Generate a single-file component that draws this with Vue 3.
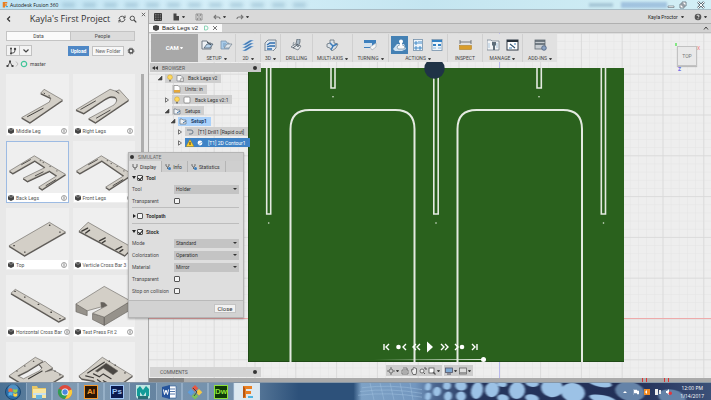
<script setup>
import { ref } from 'vue'

const leg = '#d3cfc7'
const edge = '#625f5a'
const plate = (d, extra = '') =>
  `<path d="${d}" transform="translate(0 1)" fill="#4a4743" stroke="#4a4743" stroke-width=".5" stroke-linejoin="round"/><path d="${d}" fill="${leg}" fill-rule="evenodd" stroke="${edge}" stroke-width=".6" stroke-linejoin="round"/>${extra}`
const line = (d, w = 1) => `<path d="${d}" fill="none" stroke="#3f3d3a" stroke-width="${w}" stroke-linecap="round"/>`

const parts = [
  { name: 'Middle Leg', art: plate('M38 14L57 25L23.5 48L15 43L43.5 27L45 23L34.5 18Z', line('M21 42L37 33.5M38 18l.5.3M43 20.5l.5.3', 1)) },
  { name: 'Right Legs', art: plate('M37 14L43 16L46.5 14.5L56 25L22 48L15 44L41 30Q46 25 42 22Q37 20 32 24L10 38.5L2 35Z', line('M7 34.5L22 26M23 43.5L37 35.500M43 16l3 2', .9)) },
  { name: 'Back Legs', active: true, art: plate('M28 13.5L60 32.5L36 48L32.5 45.5L51 34L43.5 29L21 39.5L16.5 36.5L39 25.5L28.5 18.5L6 31.5L2.5 29Z', line('M24 17.5L15 22.5M34 18.500h.3M37 20.500h.3M44 24.500h.3M51 29h.3M40 44L50 38M29 34L37 30', .9)) },
  { name: 'Front Legs', art: plate('M28 13.5L60 32.5L36 48L32.5 45.5L51 34L28.5 18.5L6 31.5L2.5 29Z', line('M24 17.5L15 22.5M34 18.500h.3M38 21.500h.3M44 24.500h.3M51 29h.3M40 44L50 38', .9)) },
  { name: 'Top', art: plate('M43.500 13L60 23L18 47L2 37Z', line('M43.500 16h.5M54 23h.5M7 37h.5M18 43.500h.5', 1.3)) },
  { name: 'Verticle Cross Bar 3', art: plate('M14.500 13L60 39L52 47L5 22Z', line('M8 22l6-3M12 24l4-3M26 32l6-3M29 34l3-2M43 41l6-3M47 43l3-2', 1.4)) },
  { name: 'Horizontal Cross Bar', art: plate('M8.500 13L60 42.500L53 46L4 17Z', line('M8 15h.5M18 21h.5M32 28.500h.5M45 36.500h.5M54 43h.5', 1.3)) },
  {
    name: 'Test Press Fit 2',
    art: `<path d="M2 28V36L13.500 40V33ZM19 38V44L31 50V41ZM31 41L58 25V34L31 50Z" fill="#96928b" stroke="${edge}" stroke-width=".6"/><path d="M2 28L31 10L58 25L31 41.500L19 37.500L34 29.500Q31 25.500 27.500 26.500L28 31L13.500 35Z" fill="${leg}" stroke="${edge}" stroke-width=".6"/><path d="M27.500 26.500Q31 25.500 34 29.500L28 32.500z" fill="#66625c"/>`,
  },
  { name: '', art: plate('M29 14L37 18L21 28L11 33L17 36L33 28L36 25L33 21L39 18L42 21L47 25L39 29L47 27L58 33L30 50L2 33Z', line('M10 28h.5M18 23h.5M27 18h.5M22 36L36 28M49 28h.5M54 32h.5', 1.1)) },
  { name: '', art: plate('M29 14L60 33L36 50L20 38L8 36L5 33L12 28ZM22 28L33 20L45 28L40 32L30 25L24 29Z', line('M14 30L31 19M20 31l6 3 4-3 8 5M24 37l10 7M30 38l14 7M12 33l8 2M36 18h.5M42 22h.5M52 30h.5', 1.2)) },
]

const sheetIcon = '<path d="M1 2h5l1 2h3v6H1z" fill="#eef1f4" stroke="#66727e" stroke-width=".9"/><path d="M3 9l3-4h6l-3 4z" fill="#b9d3ea" stroke="#4f5f6e" stroke-width=".8"/><path d="M6 3l4 3" stroke="#39454f"/>'
const groups = [
  { label: 'SETUP', menu: true, w: 38, icons: [
    sheetIcon,
    '<path d="M1 2h5l1 2h2v6H1z" fill="#a9cbe9" stroke="#7d95ab" stroke-width=".8"/><path d="M4 9l3-4h5l-3 4z" fill="#dfe7ee" stroke="#7d8b98" stroke-width=".8"/><path d="M3 5h3M3 7h2" stroke="#5b86b0" stroke-width=".7"/>' ] },
  { label: '2D', menu: true, w: 25, icons: ['<path d="M0 6L8 1h4L4 6zM0 9L8 4h4L4 9zM0 12L8 7h4L4 12z" fill="#3e78b5" stroke="#d9e6f2" stroke-width=".5"/>'] },
  { label: '3D', menu: true, w: 20, icons: ['<path d="M1 4l3-3h8v8l-3 3H1z" fill="#dfe7ef" stroke="#66727e" stroke-width=".8"/><path d="M3 6l3-2h5M3 8l3-1h5M3 10h5" fill="none" stroke="#2f6dae" stroke-width="1.300"/>'] },
  { label: 'DRILLING', w: 32, icons: ['<path d="M1 8l4-3 6 2-3 4z" fill="#e4e8eb" stroke="#6b747d" stroke-width=".8"/><path d="M7 0h3v3l-2 5-2-3z" fill="#a9b8c5" stroke="#515b65" stroke-width=".7"/><path d="M3 9l5-4" stroke="#515b65"/><path d="M4 3q-2 2 0 4" fill="none" stroke="#79858f" stroke-width=".8"/>'] },
  { label: 'MULTI-AXIS', menu: true, w: 40, icons: ['<path d="M1 5l3-1V1h4v3l4 1-2 4-4 3-2-3-3-1z" fill="#dce3e9" stroke="#65717c" stroke-width=".8"/><path d="M4 4l3 3 4-2M7 7l-2 4" fill="none" stroke="#3d7cba" stroke-width="1.500"/>'] },
  { label: 'TURNING', menu: true, w: 36, icons: ['<path d="M0 1h12v6H9l-3 2H0z" fill="#3e80bd"/><path d="M0 4h8v4H0z" fill="#d4e2ee"/><path d="M6 8l6-4v4l-4 3z" fill="#f7f7f7" stroke="#8795a2" stroke-width=".5"/>'] },
  { label: 'ACTIONS', menu: true, w: 59, icons: [
    '<path d="M0 10l4-5h7l2 5-4 2H2z" fill="#cfe2f1"/><path d="M4 8l2-2h4l2 2-1 2H5z" fill="#fafafa" stroke="#456680" stroke-width=".5"/><path d="M7 7V4h2v3z" fill="#fff"/><circle cx="8" cy="2.500" r="2" fill="#fff"/>',
    '<rect x="1.500" y=".5" width="9" height="11" fill="#edf4fa" stroke="#7391ab" stroke-width=".8"/><path d="M3 3h2v2H3zM7 2v3M9 2v3M3 8h2v2H3zM7 8h2v2H7z" fill="none" stroke="#3381c4" stroke-width=".9"/>',
    '<rect x="1" y=".5" width="10" height="11" fill="#edf4fa" stroke="#7391ab" stroke-width=".8"/><path d="M1 2h10M2 6h3M7 6h3" stroke="#3381c4" stroke-width="2"/><path d="M2 9h3M7 9h3" stroke="#8ab6dc"/>' ] },
  { label: 'INSPECT', w: 35, icons: ['<path d="M1 3h11M1 1v4M12 1v4" stroke="#555d65" stroke-width=".8"/><rect x=".5" y="6.500" width="12" height="4" fill="#d99d2b" stroke="#a8761a" stroke-width=".5"/>'] },
  { label: 'MANAGE', menu: true, w: 40, icons: [
    '<path d="M0 1h4l1 1h7v9H0z" fill="#f4f6f8" stroke="#7a8793" stroke-width=".8"/><path d="M5 3h4v3L8 7v4H6V7L5 6z" fill="#5f6e7b"/><path d="M2 4v5M10 4v5" stroke="#aac5dc"/>',
    '<rect x="1" y="1" width="11" height="10" fill="#fff" stroke="#313b46"/><path d="M1 2h11" stroke="#27313b" stroke-width="2"/><path d="M4 5l5 4" stroke="#30506e" stroke-width="1.100"/><path d="M3 9h3M8 5h2" stroke="#3f83c0" stroke-width="1.100"/>' ] },
  { label: 'ADD-INS', menu: true, w: 34, icons: ['<rect x="1" y="1" width="10" height="9" fill="#c7ccd1" stroke="#606a73" stroke-width=".8"/><path d="M1 2h10M1 5h10" stroke="#57616b" stroke-width="1.300"/><circle cx="10" cy="9" r="2.300" fill="#8ca3c2" stroke="#4d617f" stroke-width=".8"/>'] },
]

const bulb = '<circle cx="4" cy="3.200" r="2.400" fill="#ffd95e" stroke="#c99f2c" stroke-width=".5"/><path d="M3 6h2v1.500H3z" fill="#777"/>'
const box = '<path d="M1 1.500h4l2 2V7H1z" fill="#fafafa" stroke="#7b8087" stroke-width=".7"/>'
const folder = '<path d="M1 2h2l1 1h3v4H1z" fill="#eef2f6" stroke="#65717d" stroke-width=".7"/><path d="M4 6l3-2" stroke="#3a6fa3"/>'
const tree = [
  { text: 'Back Legs v2', depth: 0, state: 'open', icons: [bulb, box + '<path d="M5 4h2.500v3.500H4z" fill="#ddd" stroke="#777" stroke-width=".5"/>'] },
  { text: 'Units: in', depth: 1, state: 'none', icons: ['<path d="M1 .5h4l2 2v5H1z" fill="#fff" stroke="#777" stroke-width=".6"/><path d="M1 5h6v2.500H1z" fill="#e5a83b"/>'] },
  { text: 'Back Legs v2:1', depth: 1, state: 'closed', icons: [bulb, '<rect x="1" y="1" width="6" height="6" rx="1" fill="#fff" stroke="#777" stroke-width=".7"/>'] },
  { text: 'Setups', depth: 1, state: 'open', icons: [folder] },
  { text: 'Setup1', depth: 2, state: 'open', icons: [folder], tone: 'soft' },
  { text: '[T1] Drill1 [Rapid out]', depth: 3, state: 'closed', icons: ['<path d="M1 2h4a2 2 0 0 1 0 4H3" fill="none" stroke="#6a7b8b"/>'] },
  { text: '[T1] 2D Contour1', depth: 3, state: 'closed', icons: ['<path d="M4 .5L8 7.500H0z" fill="#ffcf2e" stroke="#a07c10" stroke-width=".4"/><path d="M4 3v3" stroke="#222" stroke-width=".9"/>', '<circle cx="4" cy="4" r="2.400" fill="#fff"/><path d="M2 6l4-3" stroke="#8fb6da"/>'], tone: 'strong' },
]

const tool = ref('Holder')
const mode = ref('Standard')
const color = ref('Operation')
const material = ref('Mirror')
const position = ref(100)

const playback = [
  { name: 'Start', w: 8, d: 'M1 1v6M6 1L3 4l3 3' },
  { name: 'Previous operation', w: 11, d: 'M10 1L7 4l3 3', dot: 2.5 },
  { name: 'Step back', w: 9, d: 'M4 1L1 4l3 3M8 1L5 4l3 3' },
  { name: 'Play', w: 8, play: true },
  { name: 'Step forward', w: 9, d: 'M1 1l3 3-3 3M5 1l3 3-3 3' },
  { name: 'Next operation', w: 11, d: 'M1 1l3 3-3 3', dot: 8 },
  { name: 'End', w: 8, d: 'M2 1l3 3-3 3M7 1v6' },
]

const apps = [
  { name: 'Start', flat: true, art: '<circle cx="8" cy="8" r="7.500" fill="#2c6ea8" stroke="#123c66" stroke-width=".8"/><circle cx="8" cy="5" r="5" fill="#75b5e0" opacity=".5"/><path d="M3.500 5q2-1.500 4 0v3q-2-1.200-4 0z" fill="#f0653a"/><path d="M8.300 5q2 1.300 4 0v3q-2 1.300-4 0z" fill="#9bcf3f"/><path d="M3.500 9q2-1.300 4 0v3q-2-1.300-4 0z" fill="#55b6ee"/><path d="M8.300 9q2 1.300 4 0v3q-2 1.300-4 0z" fill="#ffd23e"/>' },
  { name: 'Explorer', art: '<path d="M1 2h5l1 2h8v10H1z" fill="#e8c767"/><path d="M2 5h13v9H2z" fill="#f8e6a0"/><path d="M2 9h13v2H2z" fill="#c9e2ee"/><path d="M5 11h6v4H5z" fill="#69b4dd"/>' },
  { name: 'Chrome', art: '<circle cx="8" cy="8" r="7" fill="#dd4b3e"/><path d="M8 8L1.900 4.500A7 7 0 0 0 8 15l3-5z" fill="#2f9e55"/><path d="M8 8l6.700-2.500A7 7 0 0 1 8 15l3-5z" fill="#fbcc3a"/><circle cx="8" cy="8" r="3.500" fill="#fff"/><circle cx="8" cy="8" r="2.700" fill="#4a87dd"/>' },
  { name: 'Illustrator', text: 'Ai', bg: '#2c1604', fg: '#f79a2c' },
  { name: 'Photoshop', text: 'Ps', bg: '#0b1b50', fg: '#9ec6f8' },
  { name: 'Maya', flat: true, art: '<path d="M1 1h14v13l-3 1H3l-2-2z" fill="#bfe6e2"/><path d="M2 12V5l3-3 3 4 3-4 3 3v7l-3 1V8l-3 4-3-4v5z" fill="#139b98"/><path d="M3 12h10v3H3z" fill="#2a6f75"/>' },
  { name: 'Word', art: '<path d="M7 2h8v12H7z" fill="#fff" stroke="#2b5797" stroke-width=".6"/><path d="M9 5h5M9 7.500h5M9 10h5" stroke="#2b5797" stroke-width=".8"/><path d="M1 3l8-2v14l-8-2z" fill="#26549c"/><path d="M2.500 5.500l1 5L5 6l1.500 4.500 1-5" fill="none" stroke="#fff"/>' },
  { name: 'Git', art: '<path d="M8 1l3.300 3.300L8 7.600 4.700 4.300z" fill="#e9573f"/><path d="M4 5l3.300 3.300L4 11.600.7 8.300z" fill="#5b9fe0"/><path d="M12 5l3.300 3.300L12 11.600 8.700 8.300z" fill="#f6c945"/><path d="M8 9l3.300 3.300L8 15.600 4.700 12.300z" fill="#7cc35c"/><path d="M6 4l4 4-3 4" fill="none" stroke="#3b4551"/>' },
  { name: 'Dreamweaver', text: 'Dw', bg: '#0e3a08', fg: '#8ee236' },
  { name: 'Fusion 360', current: true, art: '<path d="M4 2h9v3H7v2h5v3H7v4H4z" fill="#e87f22"/><path d="M4 2l2 2v9l-2 1z" fill="#b95710"/><path d="M9 12h5v2H9z" fill="#4fb4e0"/>' },
]

const cells = [
  [128, 4, 3, 4], [128, 14, 3, 4], [137, 9, 4, 5], [147, 3, 4, 4], [148, 14, 4, 5], [161, 3, 6, 5], [161, 14, 5, 5],
  [177, 8, 6, 9], [192, 7, 7, 8], [202, 1, 5, 3], [203, 16, 6, 4], [217, 8, 8, 9], [232, 16, 7, 4], [232, 0, 7, 4],
  [252, 5, 11, 10], [273, 10, 12, 10], [300, 0, 12, 4], [303, 17, 14, 4], [330, 9, 15, 10], [372, 15, 14, 8],
]
</script>

<template>
  <div class="screen">
    <header class="titlebar">
      <svg class="f-logo" viewBox="0 0 8 8" aria-hidden="true"><path d="M1 .5h6v2H4v1h2.500v2H4v2.500H1z" fill="#e87f22" /><path d="M5 6h3v1.500H5z" fill="#45a8d8" /></svg>
      <span class="app-name">Autodesk Fusion 360</span>
      <div class="glass" aria-hidden="true"><i v-for="n in 12" :key="n"></i></div>
      <div class="glass-right" aria-hidden="true"><i></i><b></b></div>
      <div class="win-buttons">
        <button aria-label="Minimize"><svg viewBox="0 0 8 8"><path d="M1 5h6v1.500H1z" fill="#fff" stroke="#5b6871" stroke-width=".6" /></svg></button>
        <button aria-label="Restore"><svg viewBox="0 0 8 8"><path d="M3 1h4v4H3zM1 3h4v4H1z" fill="#fff" stroke="#5b6871" stroke-width=".8" /></svg></button>
        <button class="last" aria-label="Close window"><svg viewBox="0 0 8 8"><path d="M1 1l6 6M7 1L1 7" stroke="#5b6871" stroke-width="2.400" /><path d="M1 1l6 6M7 1L1 7" stroke="#fff" /></svg></button>
      </div>
    </header>

    <div class="main">
      <aside class="data-panel">
        <button class="panel-close" aria-label="Close data panel"><svg viewBox="0 0 6 6"><path d="M1 1l4 4M5 1L1 5" stroke="#555" /></svg></button>
        <div class="project">
          <button aria-label="Back"><svg class="i8" viewBox="0 0 8 8"><path d="M4 1.500L1.500 4 4 6.500" fill="none" stroke="#333" stroke-width="1.200" /></svg></button>
          <h1>Kayla's First Project</h1>
          <button aria-label="Refresh"><svg class="i8" viewBox="0 0 8 8"><path d="M1 4a3 3 0 0 1 5-2l1 1M7 4a3 3 0 0 1-5 2L1 5M7 .5V3H5M1 7.500V5h2" fill="none" stroke="#444" stroke-width=".9" /></svg></button>
          <button aria-label="Search"><svg class="i8" viewBox="0 0 8 8"><circle cx="3.300" cy="3.300" r="2.200" fill="none" stroke="#444" stroke-width=".9" /><path d="M5 5l2.300 2.300" stroke="#444" stroke-width="1.200" /></svg></button>
        </div>
        <div class="data-tabs"><button class="on">Data</button><button>People</button></div>
        <div class="actions">
          <div class="split">
            <button aria-label="Branches"><svg class="i8" viewBox="0 0 8 8"><path d="M2 1v6M2 6h2q2 0 2-3" fill="none" stroke="#444" stroke-width=".9" /><circle cx="2" cy="1.500" r="1" fill="#444" /><circle cx="6" cy="2" r="1.200" fill="#444" /><circle cx="2" cy="6.500" r="1" fill="#444" /></svg></button>
            <button aria-label="More branches"><svg class="i8" viewBox="0 0 8 8"><path d="M1.500 2.500L4 5l2.500-2.500" fill="none" stroke="#444" stroke-width="1.200" /></svg></button>
          </div>
          <button class="upload">Upload</button>
          <button class="folder">New Folder</button>
          <button class="gear" aria-label="Settings"><svg class="i8" viewBox="0 0 8 8"><circle cx="4" cy="4" r="2" fill="none" stroke="#555" stroke-width="1.400" /><circle cx="4" cy="4" r="3" fill="none" stroke="#555" stroke-width=".8" stroke-dasharray="1.200 1.200" /></svg></button>
        </div>
        <nav class="crumbs">
          <svg class="i8" viewBox="0 0 8 8"><path d="M4 2L1.500 6.500M4 2l2.500 4.500" stroke="#444" stroke-width=".8" /><path d="M3 .5h2v2H3zM.5 5h2v2h-2zM5.500 5h2v2h-2z" fill="#444" /></svg>
          <svg class="i4" viewBox="0 0 4 8"><path d="M1 1.500L3 4 1 6.500" fill="none" stroke="#aaa" stroke-width=".7" /></svg>
          <svg class="i8" viewBox="0 0 8 8"><circle cx="4" cy="4" r="2.700" fill="none" stroke="#3fc598" stroke-width="1.200" /></svg>
          <a href="#master">master</a>
        </nav>
        <div class="library">
          <div class="cards">
            <article v-for="(p, k) in parts" :key="k" class="card" :class="{ active: p.active }">
              <svg class="thumb" viewBox="0 0 62 52" v-html="p.art"></svg>
              <footer v-if="p.name">
                <svg class="i6" viewBox="0 0 6 6"><path d="M0 1l3-1 3 1v3.500L3 6 0 4.500z" fill="#444" /><path d="M0 1l3 1.300L6 1" fill="none" stroke="#ccc" stroke-width=".5" /></svg>
                <span>{{ p.name }}</span>
                <svg class="i6" viewBox="0 0 6 6"><circle cx="3" cy="3" r="2.500" fill="none" stroke="#777" stroke-width=".7" /><path d="M3 1.300v3.400" stroke="#777" stroke-width=".9" /></svg>
              </footer>
            </article>
          </div>
          <div class="scroll"><i></i></div>
        </div>
      </aside>

      <section class="workspace">
        <div class="quick">
          <svg class="i8" viewBox="0 0 8 8"><path d="M.5 .5h7v7h-7zM.5 3h7M.5 5.300h7M3 .5v7M5.300 .5v7" fill="#777" stroke="#333" stroke-width=".9" /></svg>
          <span class="with-menu"><svg class="i8" viewBox="0 0 8 8"><path d="M1.500 .5h3v2.500h2.500v4.500h-5.500z" fill="#444" /></svg><i class="caret"></i></span>
          <svg class="i8" viewBox="0 0 8 8"><path d="M1 1h6v6H1zM2.500 1v2h3V1M2.500 7V5h3v2" fill="none" stroke="#888" stroke-width=".8" /></svg>
          <span class="with-menu"><svg class="i8" viewBox="0 0 8 8"><path d="M3 2L1 4l2 2M1 4h4q2 0 2 2" fill="none" stroke="#777" stroke-width="1.100" /></svg><i class="caret"></i></span>
          <span class="with-menu"><svg class="i8" viewBox="0 0 8 8"><path d="M5 2l2 2-2 2M7 4H3Q1 4 1 6" fill="none" stroke="#777" stroke-width="1.100" /></svg><i class="caret"></i></span>
          <span class="user">Kayla Proctor <i class="caret"></i></span>
          <span class="with-menu"><svg class="i8" viewBox="0 0 8 8"><circle cx="4" cy="4" r="3.300" fill="#555" /><path d="M3 3q0-1 1-1t1 1-1 1.200M4 5.200v1" fill="none" stroke="#fff" stroke-width=".8" /></svg><i class="caret"></i></span>
        </div>
        <div class="doc-tabs">
          <div class="doc-tab">
            <svg class="i6" viewBox="0 0 6 6"><path d="M0 1l3-1 3 1v3.500L3 6 0 4.500z" fill="#444" /></svg>
            <span>Back Legs v2</span>
            <svg class="i6 status" viewBox="0 0 6 6"><path d="M1.500 1h1.500a2 2 0 0 1 0 4H1.500z" fill="none" stroke="#6fcca6" stroke-width=".8" /></svg>
            <button aria-label="Close document"><svg class="i6" viewBox="0 0 6 6"><path d="M1 1l4 4M5 1L1 5" stroke="#777" /></svg></button>
          </div>
          <svg class="i6 collapse" viewBox="0 0 6 6"><path d="M1 4.500L3 2l2 2.500" fill="none" stroke="#444" /></svg>
        </div>

        <div class="stage">
          <svg class="canvas" viewBox="149 33 562 345" preserveAspectRatio="xMinYMin slice" role="img" aria-label="Stock simulation">
            <defs>
              <pattern id="minor" x="499.300" y="318.500" width="8.160" height="8.160" patternUnits="userSpaceOnUse"><path d="M0 0H8.160M0 0V8.160" stroke="#e4e4e4" stroke-width="1" fill="none" /></pattern>
              <pattern id="major" x="499.300" y="318.500" width="40.800" height="40.800" patternUnits="userSpaceOnUse"><path d="M0 .4H40.800M.4 0V40.800" stroke="#d6d6d6" stroke-width=".8" fill="none" /></pattern>
            </defs>
            <rect x="149" y="32" width="562" height="346" fill="#eeeeee" />
            <rect x="149" y="32" width="562" height="346" fill="url(#minor)" />
            <rect x="149" y="32" width="562" height="346" fill="url(#major)" />
            <path d="M149 318.500H711" stroke="#eeaaaa" />
            <path d="M499.500 32V378" stroke="#b9b9ec" />
            <rect x="248" y="68" width="376" height="294" fill="#2a611d" />
            <path d="M248.500 68V362M248 361.500H624" stroke="#1f4a16" fill="none" />
            <g fill="none" stroke="#e4eae1" stroke-width="2">
              <path d="M290.500 362V129Q290.500 110 309.500 110H395.500Q414.500 110 414.500 129V362" />
              <path d="M457.500 362V129Q457.500 110 476.500 110H563Q582 110 582 129V362" />
              <g stroke-width="1.600">
                <path d="M266.700 68V214H270.700V68M433.800 68V214H438.200V68M601.300 68V214H605.500V68M331 68V88H335V68M537 68V88H541.300V68" />
              </g>
            </g>
            <g fill="#dfe8db"><circle cx="268.700" cy="223" r=".8" /><circle cx="436" cy="223" r=".8" /><circle cx="603.500" cy="223" r=".8" /><circle cx="333" cy="96.700" r=".8" /><circle cx="539" cy="96.700" r=".8" /></g>
            <circle cx="434.500" cy="68.500" r="10.200" fill="#1f3346" />
          </svg>

          <div class="ribbon">
            <button class="cam">CAM <i class="caret"></i></button>
            <div v-for="g in groups" :key="g.label" class="group" :style="{ width: g.w + 'px' }">
              <div class="icons">
                <button v-for="(ic, k) in g.icons" :key="k" :class="{ picked: g.label === 'ACTIONS' && k === 0 }" :aria-label="g.label + ' ' + (k + 1)"><svg class="i12" viewBox="0 0 13 12" v-html="ic"></svg></button>
              </div>
              <span class="label">{{ g.label }}<i v-if="g.menu" class="caret"></i></span>
            </div>
          </div>

          <div class="browser">
            <div class="bar"><svg class="i6" viewBox="0 0 6 6"><path d="M3 1L0 3l3 2zM6 1L3 3l3 2z" fill="#333" /></svg><span>BROWSER</span><i class="pin"></i></div>
            <ul>
              <li v-for="n in tree" :key="n.text" :class="['d' + n.depth, n.tone]">
                <svg class="i6 twist" viewBox="0 0 6 6"><path v-if="n.state === 'open'" d="M5 1v4H1z" fill="#444" stroke="#444" stroke-width=".6" /><path v-if="n.state === 'closed'" d="M1.500 .8L4.500 3 1.500 5.200z" fill="none" stroke="#555" stroke-width=".8" /></svg>
                <span class="node"><svg v-for="(ic, k) in n.icons" :key="k" class="i8" viewBox="0 0 8 8" v-html="ic"></svg><span class="text">{{ n.text }}</span></span>
              </li>
            </ul>
          </div>

          <div class="cube" aria-hidden="true">
            <div class="face">TOP</div>
            <span class="ax-x">X</span><span class="ax-z">Z</span><i class="ax-y"></i>
          </div>

          <div class="player">
            <div class="keys">
              <button v-for="b in playback" :key="b.name" :aria-label="b.name">
                <svg v-if="b.play" width="8" height="12" viewBox="0 0 8 12"><path d="M1 .5L7 6 1 11.500z" fill="#fff" /></svg>
                <svg v-else :width="b.w" height="8" :viewBox="`0 0 ${b.w} 8`"><path :d="b.d" fill="none" stroke="#fff" stroke-width="1.400" /><circle v-if="b.dot" :cx="b.dot" cy="4" r="2.300" fill="#fff" /></svg>
              </button>
            </div>
            <input v-model="position" type="range" min="0" max="100" aria-label="Simulation position" />
          </div>

          <div class="comments"><span>COMMENTS</span><i class="pin"></i></div>

          <div class="nav-tools">
            <div>
              <svg class="i8" viewBox="0 0 8 8"><path d="M4 0v8M0 4h8" stroke="#666" stroke-width=".9" /><circle cx="4" cy="4" r="2" fill="#ccc" stroke="#666" stroke-width=".8" /></svg><i class="caret"></i>
              <svg class="i8" viewBox="0 0 8 8"><path d="M1 3h6v4H1zM2 1h4v2" fill="#ddd" stroke="#666" stroke-width=".8" /><path d="M2 5h4" stroke="#666" stroke-width=".8" /></svg>
              <svg class="i8" viewBox="0 0 8 8"><path d="M1.500 4V2.500L3 3V1l1-.5 1 .5 1.500.5V5L6 7.500H3z" fill="#eee" stroke="#555" stroke-width=".8" /></svg>
              <svg class="i8" viewBox="0 0 8 8"><circle cx="3" cy="4" r="2" fill="#eee" stroke="#555" stroke-width=".8" /><path d="M4.500 5.500L6 7M5 1h2v2" fill="none" stroke="#555" /></svg>
              <svg class="i8" viewBox="0 0 8 8"><rect x="1" y="1" width="5" height="5" fill="#fff" stroke="#555" stroke-width=".8" /><path d="M5 5l2.500 2.500" stroke="#555" stroke-width="1.200" /></svg><i class="caret"></i>
            </div>
            <div>
              <svg class="i8" viewBox="0 0 8 8"><rect x=".5" y="1" width="7" height="4.500" fill="#7fa9d2" stroke="#556" stroke-width=".8" /><path d="M2 7h4" stroke="#556" /></svg><i class="caret"></i>
              <svg class="i8" viewBox="0 0 8 8"><rect x=".5" y="1" width="7" height="6" fill="#ddd" stroke="#666" stroke-width=".8" /><path d="M1 5h6v2H1z" fill="#999" /></svg><i class="caret"></i>
            </div>
          </div>
        </div>
        <div class="timeline"><i class="done"></i><span><i></i><i></i></span><span><i></i><i></i></span></div>
      </section>

      <form class="dialog" aria-label="Simulate" @submit.prevent>
        <div class="dialog-title"><i class="pin"></i>SIMULATE</div>
        <div class="dialog-tabs">
          <button type="button" class="on"><svg class="i6" viewBox="0 0 6 6"><path d="M1 0v3l2 1 2-1V0M3 4v2" fill="none" stroke="#666" /></svg>Display</button>
          <button type="button"><svg class="i6" viewBox="0 0 6 6"><path d="M1 0v2l1.500 1L4 2V0M2.500 3v2" fill="none" stroke="#666" stroke-width=".9" /><circle cx="4.500" cy="4.500" r="1.500" fill="#3c7fc0" /></svg>Info</button>
          <button type="button"><svg class="i6" viewBox="0 0 6 6"><path d="M1 0v2l1.500 1L4 2V0M2.500 3v2" fill="none" stroke="#666" stroke-width=".9" /><circle cx="4.500" cy="4.500" r="1.500" fill="#3c7fc0" /></svg>Statistics</button>
        </div>
        <div class="sect">
          <label class="head open"><input type="checkbox" checked />Tool</label>
          <div class="field"><label for="tool">Tool</label><span class="sel"><select id="tool" v-model="tool"><option>Holder</option><option>Shaft</option></select></span></div>
          <div class="field"><label for="tool-tr">Transparent</label><input id="tool-tr" type="checkbox" /></div>
        </div>
        <div class="sect mid">
          <label class="head"><input type="checkbox" />Toolpath</label>
        </div>
        <div class="sect last">
          <label class="head open"><input type="checkbox" checked />Stock</label>
          <div class="field"><label for="mode">Mode</label><span class="sel"><select id="mode" v-model="mode"><option>Standard</option><option>Fast</option></select></span></div>
          <div class="field"><label for="color">Colorization</label><span class="sel"><select id="color" v-model="color"><option>Operation</option><option>Tool</option></select></span></div>
          <div class="field"><label for="mat">Material</label><span class="sel"><select id="mat" v-model="material"><option>Mirror</option><option>Matte</option></select></span></div>
          <div class="field"><label for="st-tr">Transparent</label><input id="st-tr" type="checkbox" /></div>
          <div class="field"><label for="stop">Stop on collision</label><input id="stop" type="checkbox" /></div>
        </div>
        <div class="foot"><button type="button">Close</button></div>
      </form>
    </div>

    <footer class="taskbar">
      <svg class="wallpaper" viewBox="0 0 411 18" preserveAspectRatio="none" aria-hidden="true">
        <defs>
          <linearGradient id="sky" x1="0" x2="1"><stop offset="0" stop-color="#2d517a" /><stop offset=".13" stop-color="#2d517a" /><stop offset=".15" stop-color="#7ea2c6" /><stop offset=".28" stop-color="#7397bf" /><stop offset=".33" stop-color="#4a658e" /><stop offset=".42" stop-color="#25355c" /><stop offset=".8" stop-color="#222f57" /><stop offset="1" stop-color="#3b5078" /></linearGradient>
          <filter id="soft"><feGaussianBlur stdDeviation=".8" /></filter>
        </defs>
        <rect width="411" height="18" fill="url(#sky)" />
        <path d="M62 5Q90 1 122 7M60 9Q90 5 122 11M58 13Q90 9 122 15M70 0l4 18M80 0l4 18M90 0l4 18M100 0l4 18M110 0l3 18" fill="none" stroke="#a3c3e0" stroke-width=".8" opacity=".6" />
        <g filter="url(#soft)"><ellipse v-for="(c, k) in cells" :key="k" :cx="c[0]" :cy="c[1]" :rx="c[2]" :ry="c[3]" :transform="`rotate(12 ${c[0]} ${c[1]})`" :fill="c[0] > 310 ? '#6583a8' : '#9cc2e6'" /></g>
      </svg>
      <div class="apps">
        <button v-for="a in apps" :key="a.name" :aria-label="a.name" :class="{ flat: a.flat, current: a.current }">
          <span v-if="a.text" class="badge" :style="{ background: a.bg, color: a.fg }">{{ a.text }}</span>
          <svg v-else class="i16" viewBox="0 0 16 16" v-html="a.art"></svg>
        </button>
      </div>
      <div class="tray">
        <svg class="i6" viewBox="0 0 6 6"><path d="M1 4l2-2 2 2z" fill="#fff" /></svg>
        <svg class="i6" viewBox="0 0 6 6"><path d="M0 0v6M1 1h3v3H1M4 2h2v3H4" fill="#fff" stroke="#fff" stroke-width=".5" /></svg>
        <svg class="i6" viewBox="0 0 6 6"><rect width="6" height="6" fill="#f08a24" /><path d="M1 3l2-2v4z" fill="#fff" /></svg>
        <svg class="i6" viewBox="0 0 6 6"><path d="M0 0h3v6H0zM4 1h2v4H4z" fill="#eee" /></svg>
        <svg class="i6" viewBox="0 0 6 6"><path d="M0 2h1l2-2v6L1 4H0z" fill="#fff" /><circle cx="4.300" cy="4.300" r="1.700" fill="#e0373c" /></svg>
        <div class="clock"><span>12:00 PM</span><span>1/14/2017</span></div>
      </div>
    </footer>
  </div>
</template>

<style>
body { margin: 0; }
</style>

<style scoped>
.screen { display: flex; flex-direction: column; height: 100vh; overflow: hidden; font-family: Roboto, "Liberation Sans", sans-serif; font-size: 5px; line-height: 8px; color: #4a4a4a; background: #e8e8e8; }
.screen * { box-sizing: border-box; }
button { font: inherit; color: inherit; background: none; border: 0; padding: 0; margin: 0; }
svg { display: block; flex: none; }
.i4 { width: 4px; height: 8px; }
.i6 { width: 6px; height: 6px; }
.i8 { width: 8px; height: 8px; }
.i12 { width: 13px; height: 12px; }
.i16 { width: 16px; height: 16px; }
.caret { display: inline-block; flex: none; border: 1px solid transparent; border-top: 2px solid #444; border-bottom: 0; width: 3px; height: 2px; margin-left: 2px; vertical-align: middle; }
.pin { width: 4px; height: 4px; border-radius: 50%; background: #333; flex: none; }

.titlebar { flex: none; display: flex; align-items: center; height: 10px; padding: 0 6px 0 2px; background: linear-gradient(90deg, #bfe3f3, #d6f0f9 30%, #c4e5f0 60%, #d3eff6); border-bottom: 1px solid #a9bcc5; }
.f-logo { width: 6px; height: 7px; margin-right: 2px; }
.app-name { font-family: "Open Sans", "Liberation Sans", sans-serif; color: #111; white-space: nowrap; }
.glass { display: flex; gap: 8px; margin-left: 4px; filter: blur(2px); }
.glass i { width: 13px; height: 4px; background: #86aec4; opacity: .6; }
.glass-right { display: flex; gap: 8px; margin-left: auto; filter: blur(1px); align-items: center; }
.glass-right i { width: 24px; height: 4px; background: #8fb0c4; opacity: .6; }
.glass-right b { width: 46px; height: 6px; background: #83a9d1; opacity: .6; }
.win-buttons { display: flex; gap: 4px; }
.win-buttons .last { margin-left: 6px; }
.win-buttons svg { width: 8px; height: 8px; }

.main { flex: 1; min-height: 0; display: flex; position: relative; }
.data-panel { position: relative; width: 149px; flex: none; display: flex; flex-direction: column; min-height: 0; padding: 3px 4px 0 6px; background: #e8e8e8; border-right: 1px solid #aaa; }
.panel-close { position: absolute; right: 2px; top: 2px; }
.panel-close svg { width: 5px; height: 5px; }
.project { display: flex; align-items: center; height: 12px; padding-right: 7px; gap: 3px; }
.project h1 { flex: 1; margin: 0; padding-left: 8px; text-align: center; font: 400 9px/12px "Open Sans", sans-serif; color: #333; white-space: nowrap; }
.data-tabs { display: flex; width: 129px; height: 10px; margin-top: 6px; border: 1px solid #c4c4c4; }
.data-tabs button { flex: 1; line-height: 8px; background: #dcdcdc; }
.data-tabs .on { background: #fafafa; border-right: 1px solid #c4c4c4; }
.actions { display: flex; align-items: center; width: 129px; height: 11px; margin-top: 4px; gap: 3px; }
.split { display: flex; border: 1px solid #c2c2c2; background: #f3f3f3; height: 11px; margin-right: auto; }
.split button { width: 12px; display: grid; place-items: center; }
.split button + button { border-left: 1px solid #c2c2c2; }
.upload { width: 21px; height: 10px; background: #4f88c6; color: #fff; font-weight: 700; }
.folder { width: 32px; height: 10px; background: #f7f7f7; border: 1px solid #c2c2c2; color: #666; line-height: 8px; white-space: nowrap; }
.crumbs { display: flex; align-items: center; gap: 1px; height: 10px; margin-top: 3px; }
.crumbs a { color: #444; text-decoration: none; margin-left: 1px; }
.library { flex: 1; min-height: 0; display: flex; gap: 6px; margin-top: 5px; overflow: hidden; }
.cards { width: 129px; display: grid; grid-template-columns: 1fr 1fr; grid-auto-rows: 62px; gap: 5px 4px; }
.card { display: flex; flex-direction: column; min-width: 0; background: #efefef; border: 1px solid transparent; }
.card.active { border-color: #9dbbe3; }
.thumb { width: 100%; height: 52px; }
.card footer { flex: none; display: flex; align-items: center; gap: 2px; height: 9px; padding: 0 1px; background: #fff; margin-top: -1px; }
.card footer span { flex: 1; white-space: nowrap; color: #555; }
.scroll { width: 3px; }
.scroll i { display: block; height: 110px; background: #adadad; }

.workspace { flex: 1; min-width: 0; display: flex; flex-direction: column; }
.quick { flex: none; display: flex; align-items: center; gap: 10px; height: 14px; padding: 0 4px 0 5px; background: #d9d9d9; border-bottom: 1px solid #b0b0b0; }
.with-menu { display: flex; align-items: center; }
.user { margin-left: auto; color: #222; white-space: nowrap; }
.doc-tabs { flex: none; display: flex; align-items: center; height: 9px; background: #d2d2d2; border-bottom: 1px solid #bdbdbd; padding-right: 2px; }
.doc-tab { display: flex; align-items: center; gap: 3px; height: 8px; width: 73px; padding: 0 4px; background: #fafafa; color: #222; font-family: "Liberation Sans", sans-serif; font-size: 6px; white-space: nowrap; }
.doc-tab .status { margin-left: auto; }
.collapse { margin-left: auto; }

.stage { position: relative; flex: 1; min-height: 0; overflow: hidden; background: #eee; }
.canvas { position: absolute; inset: 0; width: 100%; height: 100%; }
.ribbon { position: absolute; top: 1px; left: 2px; display: flex; height: 28px; background: #e1e1e1; }
.cam { width: 47px; background: #a8a8a8; color: #fff; font-size: 6px; font-weight: 700; }
.cam .caret { border-top-color: #fff; margin-left: 0; }
.group { display: flex; flex-direction: column; align-items: center; border-right: 1px solid #d0d0d0; padding-top: 2px; }
.group:last-child { border-right: 0; }
.icons { display: flex; gap: 2px; height: 18px; }
.icons button { width: 17px; display: grid; place-items: center; }
.icons .picked { background: #4481b4; }
.label { line-height: 8px; white-space: nowrap; color: #444; }

.browser { position: absolute; top: 30px; left: 1px; width: 111px; }
.bar, .comments { display: flex; align-items: center; gap: 4px; height: 9px; padding: 0 4px 0 2px; background: #c9c9c9; color: #555; }
.bar .pin, .comments .pin { margin-left: auto; }
.browser ul { list-style: none; margin: 1px 0 0; padding: 0; height: 75px; display: flex; flex-direction: column; }
.browser li { flex: 1; display: flex; align-items: center; gap: 2px; padding-left: 7px; white-space: nowrap; }
.browser .d1 { padding-left: 14px; }
.browser .d2 { padding-left: 20px; }
.browser .d3 { padding-left: 27px; }
.node { display: flex; align-items: center; gap: 2px; height: 9px; padding: 0 4px 0 1px; background: #cfcfcf; }
.text { padding-left: 2px; color: #333; }
.soft .node { background: #a9d1fb; }
.soft .text { color: #1c3c66; font-weight: 700; }
.strong .node { background: #3f83c6; }
.strong .text { color: #fff; }

.cube { position: absolute; right: 14px; top: 13px; width: 20px; height: 20px; }
.face { width: 20px; height: 20px; border: 1px solid #c2c2c2; background: #e9e9e9; box-shadow: 0 1px 1px #bbb; text-align: center; line-height: 18px; color: #777; }
.ax-x { position: absolute; left: 20px; top: -2px; color: #f08080; }
.ax-z { position: absolute; left: 1px; top: 19px; color: #6a6ae6; font-weight: 700; }
.ax-y { position: absolute; left: -2px; top: -3px; width: 2px; height: 3px; background: #83e783; }

.player { position: absolute; left: 225px; bottom: 16px; width: 112px; }
.keys { display: flex; align-items: center; justify-content: space-between; height: 14px; padding: 0 8px 0 9px; }
.player input { display: block; appearance: none; width: 100%; height: 5px; margin: 3px 0 0; background: linear-gradient(90deg, transparent, #e6efe2) center / 100% 1px no-repeat; }
.player input::-webkit-slider-thumb { appearance: none; width: 5px; height: 5px; border-radius: 50%; background: #fff; }
.comments { position: absolute; left: 1px; bottom: 1px; width: 111px; height: 10px; padding-left: 10px; background: #d3d3d3; }
.nav-tools { position: absolute; left: 237px; bottom: 2px; display: flex; gap: 2px; }
.nav-tools div { display: flex; align-items: center; gap: 1px; height: 11px; padding: 0 1px; background: #cdcdcd; }
.nav-tools .caret { margin: 0 1px 0 0; }
.timeline { flex: none; display: flex; gap: 17px; height: 4px; padding-right: 42px; background: #aaa; }
.timeline .done { width: 35px; height: 4px; margin-right: auto; background: #858585; }
.timeline span { display: flex; gap: 3px; }
.timeline span i { width: 1px; height: 4px; background: #d33; }

.dialog { position: absolute; left: 128px; top: 142px; width: 116px; background: #dedede; border: 1px solid #b5b5b5; box-shadow: 0 1px 2px rgba(0, 0, 0, .3); }
.dialog-title { display: flex; align-items: center; gap: 4px; height: 8px; padding-left: 1px; background: #cdcdcd; color: #666; }
.dialog-tabs { display: flex; height: 11px; background: #cfcfcf; }
.dialog-tabs button { display: flex; align-items: center; gap: 2px; padding: 0 5px 0 3px; border-right: 1px solid #b5b5b5; color: #333; }
.dialog-tabs .on { background: #dedede; }
.sect { margin: 0 4px 0 3px; border-bottom: 1px solid #bdbdbd; }
.sect.mid { padding: 2px 0; }
.sect.last { padding: 2px 0 3px; border: 0; }
.head { position: relative; display: flex; align-items: center; gap: 3px; height: 11px; padding-left: 5px; font-weight: 700; color: #333; }
.head::before { content: ""; position: absolute; left: 1px; border: 2px solid transparent; border-left: 3px solid #222; border-right: 0; }
.head.open::before { left: 0; border: 2px solid transparent; border-top: 3px solid #222; border-bottom: 0; }
.field { display: flex; align-items: center; height: 12px; }
.field > label { width: 42px; flex: none; white-space: nowrap; }
.sel { position: relative; flex: 1; display: flex; }
.sel::after { content: ""; position: absolute; right: 2px; top: 3px; border: 2px solid transparent; border-top: 2px solid #333; border-bottom: 0; }
select { appearance: none; width: 100%; height: 9px; border: 0; border-radius: 0; padding: 0 2px; margin: 0; background: #c4c4c4; font: inherit; line-height: 9px; color: #333; }
input[type="checkbox"] { appearance: none; position: relative; width: 6px; height: 6px; margin: 0; border: 1px solid #555; border-radius: 1px; background: #f4f4f4; flex: none; }
input[type="checkbox"]:checked::after { content: ""; position: absolute; left: 1px; top: -1px; width: 2px; height: 4px; border: solid #222; border-width: 0 1px 1px 0; transform: rotate(40deg); }
.foot { display: flex; justify-content: flex-end; padding: 3px 7px 4px 0; border-top: 1px solid #b9b9b9; background: #d2d2d2; }
.foot button { width: 22px; height: 9px; background: #f2f2f2; border: 1px solid #c4c4c4; color: #333; font-size: 6px; line-height: 7px; }

.taskbar { position: relative; flex: none; display: flex; justify-content: space-between; height: 18px; background: linear-gradient(90deg, #4a7194, #6d8aa5 10%, #5d7d9d 35%, #2d517a 42%); border-top: 1px solid #8696a6; }
.wallpaper { position: absolute; left: 300px; right: 0; width: calc(100% - 300px); height: 17px; }
.apps { display: flex; }
.apps button { width: 26px; height: 17px; display: grid; place-items: center; border: 1px solid rgba(200, 220, 240, .35); border-width: 0 1px; background: rgba(210, 225, 240, .18); }
.apps .flat { background: none; border-color: transparent; }
.apps .current { background: #dce8f0; }
.badge { width: 14px; height: 14px; border: 1px solid; font: 700 8px/12px "Liberation Sans", sans-serif; text-align: center; }
.tray { position: relative; display: flex; align-items: center; gap: 5px; padding-right: 7px; }
.clock { display: flex; flex-direction: column; align-items: center; margin-left: 3px; color: #fff; white-space: nowrap; line-height: 8px; font-family: "Open Sans", sans-serif; }
</style>
